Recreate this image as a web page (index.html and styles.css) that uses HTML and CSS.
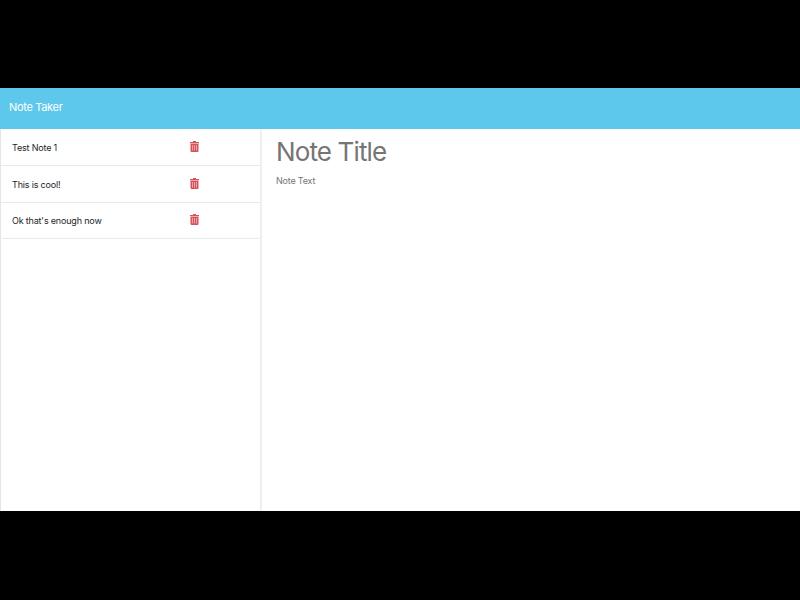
FILE: index.html
```html
<!DOCTYPE html>
<html lang="en">
<head>
<meta charset="utf-8">
<title>Note Taker</title>
<link rel="stylesheet" href="styles.css">
</head>
<body>
<div class="app">
<header class="navbar"><span class="brand">Note Taker</span></header>
<main class="content">
<aside class="sidebar">
<ul class="notes">
<li class="note"><span class="name">Test Note 1</span><svg class="trash" viewBox="0 0 9 11"><path d="M0 1h9v1.200H0zM3 0h3v1H3zM.5 2.700h8V10q0 1-1 1h-6q-1 0-1-1z"/><path class="slots" d="M2.500 4v5.500M4.500 4v5.500M6.500 4v5.500"/></svg></li>
<li class="note"><span class="name">This is cool!</span><svg class="trash" viewBox="0 0 9 11"><path d="M0 1h9v1.200H0zM3 0h3v1H3zM.5 2.700h8V10q0 1-1 1h-6q-1 0-1-1z"/><path class="slots" d="M2.500 4v5.500M4.500 4v5.500M6.500 4v5.500"/></svg></li>
<li class="note"><span class="name">Ok that's enough now</span><svg class="trash" viewBox="0 0 9 11"><path d="M0 1h9v1.200H0zM3 0h3v1H3zM.5 2.700h8V10q0 1-1 1h-6q-1 0-1-1z"/><path class="slots" d="M2.500 4v5.500M4.500 4v5.500M6.500 4v5.500"/></svg></li>
</ul>
</aside>
<section class="editor">
<input class="title" placeholder="Note Title" aria-label="Note title">
<textarea class="text" placeholder="Note Text" aria-label="Note text"></textarea>
</section>
</main>
</div>
</body>
</html>
```
FILE: styles.css
```css
* { box-sizing: border-box; }
body { margin: 0; height: 600px; padding: 88px 0 89px; background: #000; font-family: Inter, "Liberation Sans", sans-serif; overflow: hidden; }
.app { height: 423px; background: #fff; display: flex; flex-direction: column; }
.navbar { height: 41px; flex: none; background: #5ec8ec; padding: 0 9px; color: #fff; line-height: 39px; font-size: 11px; letter-spacing: -0.32px; }
.content { flex: 1; display: flex; min-height: 0; }
.sidebar { width: 262px; border-right: 2px solid #efefef; border-left: 1px solid #e6e6e6; }
.notes { list-style: none; margin: 0; padding: 0; border-bottom: 1px solid #e9e9e9; border-radius: 0 0 3px 3px; }
.note { display: flex; align-items: center; height: 37px; padding-left: 11px; font-size: 9px; letter-spacing: -0.18px; color: #212529; }
.note:first-child { height: 36px; }
.note:last-child { height: 36px; padding-bottom: 1px; }
.note + .note { border-top: 1px solid #e9e9e9; }
.name { width: 178px; }
.trash { width: 9px; height: 11px; margin-bottom: 1px; fill: #d5535b; }
.slots { fill: none; stroke: #f0b8bb; stroke-width: 0.8; }
.editor { flex: 1; display: flex; flex-direction: column; padding: 3px 14px; }
.title, .text { border: 0; outline: 0; padding: 0; background: transparent; font-family: inherit; resize: none; }
.title { height: 39px; font-size: 26px; letter-spacing: -0.87px; }
.text { flex: 1; margin-top: 3px; font-size: 9px; letter-spacing: -0.2px; line-height: 13px; }
.title::placeholder, .text::placeholder { color: #757575; opacity: 1; }
```
